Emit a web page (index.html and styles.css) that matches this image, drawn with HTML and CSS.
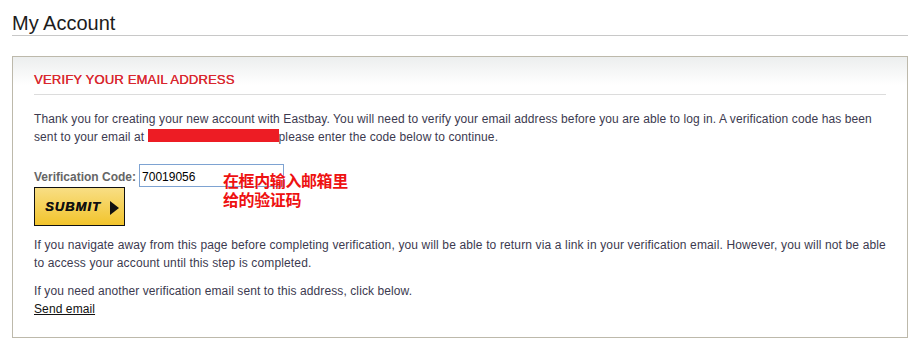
FILE: index.html
```html
<!DOCTYPE html>
<html lang="en">
<head>
<meta charset="utf-8">
<title>My Account</title>
<link rel="stylesheet" href="styles.css">
</head>
<body>
<h1 class="page-title">My Account</h1>
<section class="panel">
  <h2 class="panel-title">VERIFY YOUR EMAIL ADDRESS</h2>
  <p class="text intro">Thank you for creating your new account with Eastbay. You will need to verify your email address before you are able to log in. A verification code has been sent to your email at <span class="redact"></span>please enter the code below to continue.</p>
  <div class="verify">
    <div class="code-row">
      <label class="code-label" for="code">Verification Code:</label>
      <input class="code-input" id="code" type="text" value="70019056">
    </div>
    <button class="submit" type="button"><span class="submit-text">SUBMIT</span><svg class="submit-arrow" width="9" height="14" viewBox="0 0 9 14"><path d="M0 0 L9 7 L0 14 Z" fill="#111"/></svg></button>
    <div class="note">在框内输入邮箱里<br>给的验证码</div>
  </div>
  <p class="text gap wide">If you navigate away from this page before completing verification, you will be able to return via a link in your verification email. However, you will not be able<br>to access your account until this step is completed.</p>
  <p class="text gap">If you need another verification email sent to this address, click below.<br><a class="send-link" href="#">Send email</a></p>
</section>
</body>
</html>
```

FILE: styles.css
```css
body {
  margin: 0;
  padding: 11px 16px 0 12px;
  font-family: "Liberation Sans", Arial, sans-serif;
  background: #fff;
}

.page-title {
  margin: 0;
  font-size: 20px;
  font-weight: normal;
  line-height: 24px;
  color: #1c1c1c;
  border-bottom: 1px solid #c8c8c8;
}

.panel {
  margin-top: 20px;
  border: 1px solid #bdb9ab;
  padding: 14px 21px 19px 21px;
  background: linear-gradient(#eceeee, #ffffff 28px);
}

.panel-title {
  margin: 0;
  font-size: 13px;
  font-weight: normal;
  line-height: 17px;
  letter-spacing: 0.2px;
  color: #d9272e;
  text-shadow: 0.3px 0 0 #d9272e;
  padding-bottom: 6px;
  border-bottom: 1px solid #dcdcdc;
}

.text {
  margin: 0;
  font-size: 12px;
  line-height: 18px;
  letter-spacing: 0.1px;
  color: #3c3a4f;
}

.wide {
  letter-spacing: 0.14px;
}

.intro {
  margin-top: 15px;
}

.gap {
  margin-top: 10px;
}

.redact {
  display: inline-block;
  width: 131px;
  height: 13px;
  background: #ed1c24;
  vertical-align: -1px;
}

.verify {
  position: relative;
  margin-top: 18px;
}

.code-row {
  display: flex;
  align-items: flex-start;
}

.code-label {
  margin-top: 5px;
  font-size: 12px;
  line-height: 16px;
  font-weight: bold;
  color: #666;
}

.code-input {
  margin: 0 0 0 3px;
  box-sizing: border-box;
  width: 145px;
  height: 23px;
  padding: 3px 2px 0 2px;
  border: 1px solid #7ea3d2;
  font-family: "Liberation Sans", Arial, sans-serif;
  font-size: 12px;
  color: #000;
  outline: none;
}

.submit {
  display: flex;
  align-items: center;
  gap: 9px;
  box-sizing: border-box;
  width: 91px;
  height: 39px;
  margin: 0;
  padding: 0 0 0 10px;
  border: 1px solid #111;
  background: linear-gradient(#f8de84, #f2c42c);
  cursor: pointer;
}

.submit-text {
  font-family: "Liberation Sans", Arial, sans-serif;
  font-size: 13px;
  font-weight: bold;
  font-style: italic;
  letter-spacing: 1px;
  color: #111;
  text-shadow: 0.4px 0 0 #111;
}

.submit-arrow {
  display: block;
  margin-top: 2px;
}

.note {
  position: absolute;
  left: 189px;
  top: 7px;
  font-family: "Noto Sans CJK SC", sans-serif;
  font-size: 16px;
  line-height: 19px;
  font-weight: bold;
  letter-spacing: -0.4px;
  color: #ee1111;
}

.send-link {
  color: #111;
  text-decoration: underline;
}
```
